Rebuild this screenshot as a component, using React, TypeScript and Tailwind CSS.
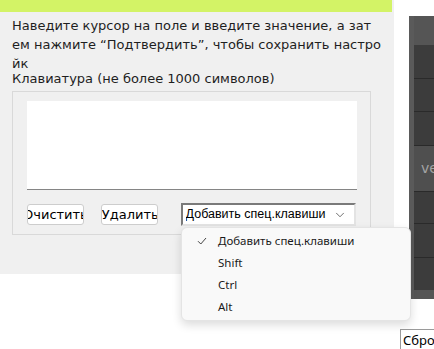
import { ChevronDown } from "lucide-react";

const menuItems = ["Добавить спец.клавиши", "Shift", "Ctrl", "Alt"];

function DarkPanel() {
  return (
    <div className="flex h-[294px] w-[30px] bg-[#4e4e4e]">
      <div className="w-[5px] bg-[#5a5a5a]" />
      <div className="flex flex-1 flex-col">
        <div className="h-[29px] bg-[#555555]" />
        <div className="h-[34px] border-b border-[#2a2a2a] bg-[#3c3c3c]" />
        <div className="h-[33px] border-b border-[#2a2a2a] bg-[#3c3c3c]" />
        <div className="h-[34px] border-b border-[#2a2a2a] bg-[#3c3c3c]" />
        <div className="flex h-[46px] items-center border-b border-[#2a2a2a] bg-[#4f4f4f] pl-[7px] font-['DejaVu_Sans',sans-serif] text-[14px] text-[#a3a3a3]">
          ve
        </div>
        <div className="h-[32px] border-b border-[#2a2a2a] bg-[#3c3c3c]" />
        <div className="h-[34px] border-b border-[#2a2a2a] bg-[#3c3c3c]" />
        <div className="h-[32px] bg-[#3c3c3c]" />
        <div className="flex-1 bg-[#555555]" />
      </div>
    </div>
  );
}

export default function App() {
  return (
    <div className="relative flex h-[349px] w-[434px] overflow-hidden bg-white font-['DejaVu_Sans',sans-serif] text-[#1e1e1e]">
      {/* left settings panel */}
      <div className="w-[394px] shrink-0">
        <div className="h-[274px] bg-[#f0f0f0]">
          <div className="h-[12px] w-[392px] bg-[#d3f366]" />
          <div className="pl-[12px] pt-[4px]">
            <p className="whitespace-nowrap text-[13px] leading-[19px]">
              Наведите курсор на поле и введите значение, а зат
              <br />
              ем нажмите “Подтвердить”, чтобы сохранить настро
              <br />
              йк
            </p>
            <p className="mt-[-2px] text-[13px] leading-[16px]">Клавиатура (не более 1000 символов)</p>
            <div className="mt-[4px] h-[144px] w-[359px] border border-[#d9d9d9] px-[14px] pt-[9px]">
              <div className="h-[89px] w-[330px] border-b border-[#858585] bg-white" />
              <div className="mt-[13px] flex items-start">
                <button className="mt-[1px] h-[21px] w-[57px] overflow-hidden whitespace-nowrap rounded-[3px] border border-[#cdcdcd] bg-white text-[13px] leading-[19px] text-black">
                  <span className="-mx-[10px] block text-center">Очистить</span>
                </button>
                <button className="ml-[17px] mt-[1px] h-[21px] w-[57px] overflow-hidden whitespace-nowrap rounded-[3px] border border-[#cdcdcd] bg-white text-[13px] leading-[19px] text-black">
                  Удалить
                </button>
                <div className="ml-[23px] flex h-[23px] w-[176px] items-center border-2 border-t-[#7a7a7a] border-l-[#7a7a7a] border-r-[#e3e3e3] border-b-[#e3e3e3] bg-white pl-[3px] pr-[7px] font-['Liberation_Sans',sans-serif] text-[12.5px] text-black">
                  <span className="min-w-0 flex-1 overflow-hidden whitespace-nowrap">Добавить спец.клавиши</span>
                  <ChevronDown size={14} strokeWidth={1.2} className="shrink-0 text-[#333]" />
                </div>
              </div>
            </div>
          </div>
        </div>
      </div>

      {/* right side: dark list and cut-off button */}
      <div className="flex flex-1 flex-col pl-[15px] pt-[16px]">
        <DarkPanel />
        <div className="ml-[-9px] mt-[30px] h-[20px] w-[60px] border-l border-t border-[#9a9a9a] bg-white pl-[2px] font-['Noto_Sans',sans-serif] text-[13px] leading-[20px] text-black">
          Сброс
        </div>
      </div>

      {/* open select menu */}
      <div className="absolute left-[181px] top-[227px] w-[230px] rounded-[6px] border border-[#e4e4e4] bg-[#f9f9f9] py-[2px] font-['Noto_Sans',sans-serif] text-[11.5px] text-[#1a1a1a] shadow-[0_4px_10px_rgba(0,0,0,0.14)]">
        {menuItems.map((item, i) => (
          <div key={item} className="flex h-[22px] items-center">
            <div className="flex w-[36px] justify-center pl-[4px]">
              {i === 0 && (
                <svg width="10" height="8" viewBox="0 0 10 8" fill="none">
                  <path d="M1 4.2 L3.8 7 L9 1" stroke="#444" strokeWidth="1" />
                </svg>
              )}
            </div>
            <span>{item}</span>
          </div>
        ))}
      </div>
    </div>
  );
}
